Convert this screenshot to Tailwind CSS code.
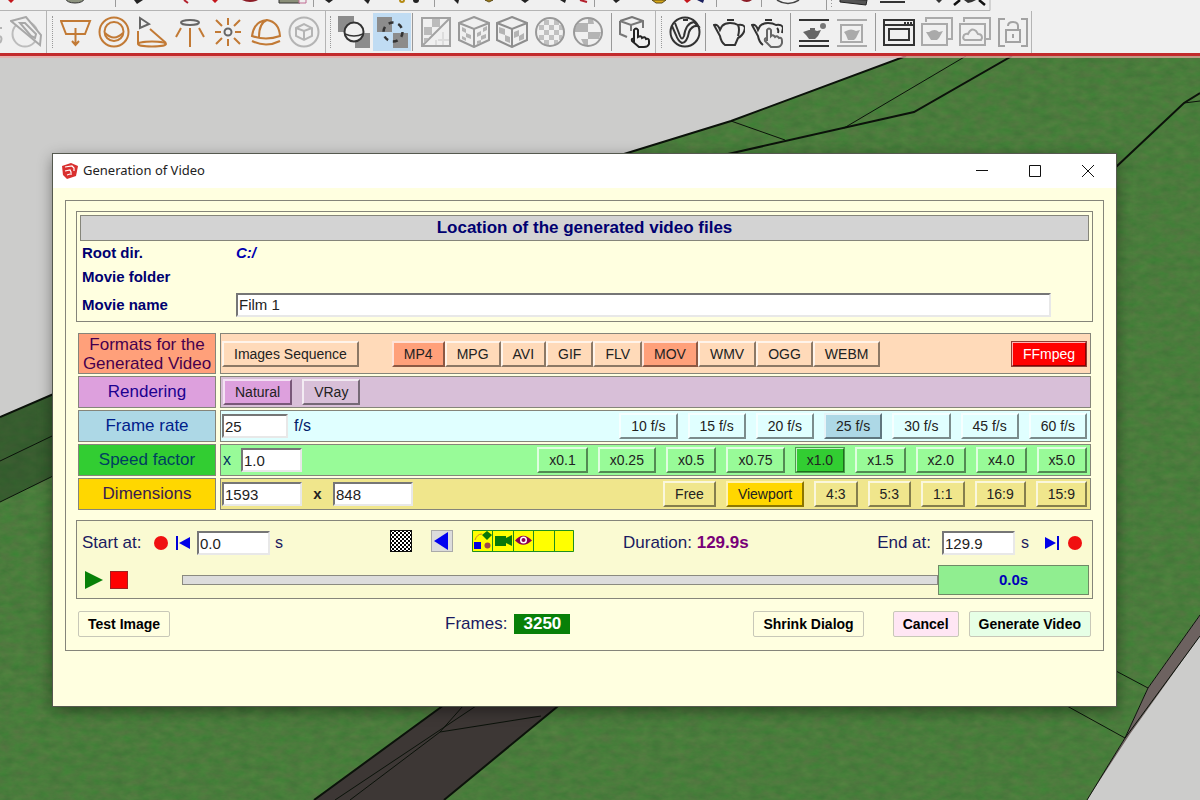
<!DOCTYPE html>
<html lang="en">
<head>
<meta charset="utf-8">
<meta name="viewport" content="width=device-width, initial-scale=1">
<title>Generation of Video</title>
<script src="https://cdn.jsdelivr.net/npm/@tailwindcss/browser@4"></script>
</head>
<body class="min-h-screen flex flex-col overflow-hidden bg-[#cccccb] font-['Liberation_Sans',Arial,sans-serif] text-[#000070]">

<!-- Toolbars -->
<header class="bg-[#f0f0f0] border-b-[3px] border-[#c22a2c]">
  <div class="h-[11px] w-full overflow-hidden">
    <svg class="block" width="1200" height="11" viewBox="0 0 1200 11" aria-hidden="true">
      <path d="M0 10.500H990V0" fill="none" stroke="#b4b4b4"/>
      <path d="M115.500 0V7M313.500 0V7M434.500 0V7M594.500 0V7M716.500 0V7M761.500 0V7M826.500 0V10" stroke="#9a9a9a"/>
      <path d="M831.500 0V8" stroke="#999" stroke-dasharray="1 2"/>
      <path d="M8 0H14L11 3ZM212 0H218L215 3ZM684 0H691L687 3Z" fill="#c4161c"/>
      <ellipse cx="75" cy="-1" rx="9" ry="4" fill="#8e9480" stroke="#333"/>
      <path d="M134 0H143L137 4ZM325 0H333L329 3ZM364 0H370L368 4ZM454 0H459L458 4ZM521 0H529L525 3ZM560 0H566L565 3ZM613 0H620L616 3ZM866 0" fill="#222"/>
      <path d="M184 0L188 3M580 0L587 2" fill="none" stroke="#b3202c" stroke-width="2"/>
      <path d="M242 0H258Q250 4 242 0ZM741 0H752Q747 4 741 0Z" fill="#8c1c26"/>
      <circle cx="402" cy="0" r="2" fill="none" stroke="#b58a13" stroke-width="2"/>
      <circle cx="416" cy="0" r="3" fill="#222"/>
      <path d="M485 0H493L489 2ZM652 0H666L662 3H656Z" fill="#d9a817" stroke="#5b4b1c"/>
      <path d="M697 0H704L703 3Z" fill="#1b2160"/>
      <path d="M279 -1H300V3H279Z" fill="#8b8f79" stroke="#333"/><path d="M299 -1H306V3H299Z" fill="#eee" stroke="#c06a92"/>
      <path d="M777 0Q788 7 799 0" fill="none" stroke="#444" stroke-width="1.500"/>
      <path d="M840 -1L867 0L866 5L840 2Z" fill="#555" stroke="#222"/>
      <path d="M880 2H905" stroke="#333" stroke-width="2"/>
      <path d="M936 0H942L939 3ZM964 0H976L972 2L968 3Z" fill="#333"/>
      <path d="M960 0L954 5M979 0L985 5" fill="none" stroke="#111" stroke-width="2.500"/>
    </svg>
  </div>
  <div class="flex h-[42px] items-center [&_button]:grid [&_button]:h-[38px] [&_button]:w-[38px] [&_button]:shrink-0 [&_button]:place-items-center [&_svg]:h-8 [&_svg]:w-8 [&_svg]:fill-none [&_svg]:stroke-2">
    <div class="flex h-full w-[47px] shrink-0 items-center border-r border-[#b4b4b4]">
      <svg class="-mr-[25px]" viewBox="0 0 32 32" stroke="#b4b4b4" aria-hidden="true"><path d="M0 12H2M0 20Q3 22 0 27"/></svg>
      <button aria-label="Section"><svg viewBox="0 0 32 32" stroke="#a8a8a8"><circle cx="15" cy="18" r="12.500" stroke="#bcbcbc"/><path d="M1 5L16 1L31 19L30 29Z" fill="#f0f0f0"/><path d="M10 7L15 7L26 18L25 22L21 20Z"/></svg></button>
    </div>
    <div class="flex h-full w-[279px] shrink-0 items-center gap-1 border-r border-[#b4b4b4] pl-[5px]">
      <span class="h-8 w-0 border-l border-dotted border-[#999]"></span>
      <div class="flex">
        <button aria-label="Rectangle light"><svg viewBox="0 0 32 32" stroke="#c27a35"><path d="M1 5H30L25 18H6ZM15.500 12V28M12 25L15.500 29L19 25"/></svg></button>
        <button aria-label="Sphere light"><svg viewBox="0 0 32 32" stroke="#c27a35"><circle cx="16" cy="16" r="14.500"/><circle cx="16" cy="15.500" r="9.500"/><path d="M7 17Q16 26 25 17"/></svg></button>
        <button aria-label="Spot light"><svg viewBox="0 0 32 32" stroke="#c27a35"><path d="M4 2L13 8L4 12Z" stroke="#666"/><path d="M2 15V28M14 13L30 27"/><ellipse cx="16" cy="28" rx="14" ry="2.500"/></svg></button>
        <button aria-label="IES light"><svg viewBox="0 0 32 32" stroke="#c27a35"><ellipse cx="16" cy="6.500" rx="9" ry="2.500" stroke="#666"/><path d="M16 12V31M7 12L2 21M25 12L30 21"/></svg></button>
        <button aria-label="Omni light"><svg viewBox="0 0 32 32" stroke="#c27a35"><circle cx="16" cy="16" r="3.500" stroke="#666"/><path d="M16 2V9M16 23V30M3 16H9M23 16H29M4 4L10 10M28 4L22 10M4 28L10 22M28 28L22 22"/></svg></button>
        <button aria-label="Dome light"><svg viewBox="0 0 32 32" stroke="#c27a35"><path d="M2 20Q4 5 17 4Q29 6 30 20Q16 25 2 20ZM9 21Q9 7 17 4M2 25Q16 32 30 25"/></svg></button>
        <button aria-label="Mesh light"><svg viewBox="0 0 32 32" stroke="#b4b4b4"><circle cx="16" cy="16" r="14.500"/><path d="M8 12L16 8L24 12V20L16 24L8 20ZM8 12L16 15L24 12M16 15V24"/></svg></button>
      </div>
    </div>
    <div class="flex h-full w-[330px] shrink-0 items-center gap-1 border-r border-[#b4b4b4] pl-1">
      <span class="h-8 w-0 border-l border-dotted border-[#999]"></span>
      <div class="flex border-r border-[#999] pr-px">
        <button aria-label="Add material"><svg viewBox="0 0 32 32" stroke="#333"><path d="M0 0H16V16H0ZM17 17H32V32H17Z" fill="#8c8c8c" stroke="none"/><circle cx="16" cy="16" r="9.500" fill="#f0f0f0"/><path d="M7 18Q16 22 25 18" stroke-width="1.500"/></svg></button>
        <button aria-label="Remove material" class="bg-[#c0dcf3]"><svg viewBox="0 0 32 32" stroke="#333"><path d="M1 1H16V16H1ZM17 17H32V32H17Z" fill="#8c8c8c" stroke="none"/><circle cx="17" cy="16" r="9.500" stroke-width="2.500" stroke-dasharray="5 5"/></svg></button>
      </div>
      <div class="flex border-r border-[#999] pr-1">
        <button aria-label="Plane mapping"><svg viewBox="0 0 32 32" stroke="#a2a2a2"><path d="M2 2H30V30H2ZM2 30L30 2"/><path d="M12 3H20V11H12ZM4 11H12V19H4ZM4 22H9L4 27Z" fill="#bbb" stroke="none"/><path d="M16 24V29M23 16V29M18 24H29" stroke="#ddd"/></svg></button>
        <button aria-label="Cube mapping fine"><svg viewBox="0 0 32 32" stroke="#999"><path d="M16 1L31 7V24L16 31L1 24V7ZM1 7L16 13L31 7M16 13V31"/><path d="M4 11L8 13V17L4 15ZM8 17L13 19V23L8 21ZM4 20L8 22V25L4 23ZM19 17L23 15V19L19 21ZM23 20L28 18V22L23 24ZM25 12L29 10V14L25 16ZM19 25L23 24V27L19 28Z" fill="#b4b4b4" stroke="none"/></svg></button>
        <button aria-label="Cube mapping coarse"><svg viewBox="0 0 32 32" stroke="#8e8e8e"><path d="M16 1L31 7V24L16 31L1 24V7ZM1 7L16 13L31 7M16 13V31"/><path d="M3 11L9 13V19L3 17ZM9 19L14 21V27L9 25ZM18 16L23 14V20L18 22ZM23 20L28 17V23L23 25Z" fill="#b4b4b4" stroke="none"/></svg></button>
        <button aria-label="Sphere mapping fine"><svg viewBox="0 0 32 32" stroke="#999"><path d="M10 4H15V9H10ZM20 4H25V9H20ZM5 9H10V14H5ZM15 9H20V14H15ZM25 9H29V14H25ZM10 14H15V19H10ZM20 14H25V19H20ZM5 19H10V24H5ZM15 19H20V24H15ZM25 19H28V24H25ZM10 24H15V29H10ZM20 24H24V28H20Z" fill="#c0c0c0" stroke="none"/><circle cx="16" cy="16" r="14"/></svg></button>
        <button aria-label="Sphere mapping coarse"><svg viewBox="0 0 32 32" stroke="#999"><path d="M6 7H16V16H3L3 12ZM16 16H29L27 23H16ZM9 23H16V29H12ZM16 3H21L22 8H16Z" fill="#b4b4b4" stroke="none"/><circle cx="16" cy="16" r="14"/></svg></button>
      </div>
      <button aria-label="Pick object"><svg viewBox="0 0 32 32" stroke="#777"><path d="M1 5L13 1L24 5V12M1 5L12 9L24 5M1 5V18L8 21M12 9V15"/><path d="M15 26V14Q17 11 19 14V21Q22 19 23 22Q26 20 27 23Q30 22 30 25V28Q29 31 25 31H20L13 25Q12 22 15 23" fill="#f0f0f0" stroke="#222"/></svg></button>
    </div>
    <div class="flex h-full w-[376px] shrink-0 items-center gap-1 border-r border-[#b4b4b4] pl-[5px]">
      <span class="h-8 w-0 border-l border-dotted border-[#999]"></span>
      <div class="flex border-r border-[#999] pr-px"><button aria-label="Render settings"><svg viewBox="0 0 32 32" stroke="#333"><circle cx="16" cy="16" r="14.500"/><path d="M6 7L11 20Q13 25 15 20Q17 7 25 6L29 10Q23 9 20 16Q18 27 13 27Q9 25 7 19L3 10M14 4H19"/></svg></button></div>
      <div class="flex border-r border-[#999] pr-1">
        <button aria-label="Render"><svg viewBox="0 0 32 32" stroke="#333"><path d="M9 10Q12 7 17 7Q22 7 25 9Q31 8 32 12Q31 19 25 22L22 29H12Q8 26 7 20L1 9Q5 8 7 14L9 10M14 4H21M25 9Q27 13 25 20"/></svg></button>
        <button aria-label="Interactive render"><svg viewBox="0 0 32 32" stroke="#333"><path d="M12 29Q8 26 7 20L1 9Q5 8 7 14L9 10Q12 7 17 7Q22 7 25 9Q31 8 32 12L31 17M14 4H21M26 12Q28 14 27 17"/><path d="M16 25V14Q18 11 20 14V20Q22 18 24 21Q26 19 28 22Q31 21 31 25V27Q30 31 26 31H20L14 25Q13 22 16 22" fill="#eee" stroke="#666"/></svg></button>
      </div>
      <div class="flex border-r border-[#999] pr-1">
        <button aria-label="Viewport render"><svg viewBox="0 0 32 32" stroke="#333"><path d="M1 4H31M1 25H31M1 30H31"/><path d="M8 15Q14 12 19 15L23 14L20 20L17 23H11L8 19L5 16ZM12 12H17V14H12Z" fill="#666" stroke="none"/><circle cx="25" cy="10" r="3" fill="#777" stroke="none"/></svg></button>
        <button aria-label="Viewport region"><svg viewBox="0 0 32 32" stroke="#aaa"><path d="M1 4H31M1 30H31M5 9H26V26H5Z"/><path d="M10 15Q15 12 20 15L24 14L20 22L18 24H12L10 19L8 16Z" fill="#aaa" stroke="none"/></svg></button>
      </div>
      <div class="flex">
        <button aria-label="Frame buffer"><svg viewBox="0 0 32 32" stroke="#333"><path d="M1 4H31V29H1ZM1 9H31M6 13H26V24H6Z"/><path d="M21 7H29" stroke-dasharray="2 1"/></svg></button>
        <button aria-label="Batch render"><svg viewBox="0 0 32 32" stroke="#aaa"><path d="M5 6V2H31V23H27M1 8H26V29H1Z"/><path d="M8 16Q14 12 18 16L22 15L18 22L16 24H10L5 16Z" fill="#aaa" stroke="none"/></svg></button>
        <button aria-label="Cloud render"><svg viewBox="0 0 32 32" stroke="#aaa"><path d="M5 6V2H31V23H27M1 8H26V29H1Z"/><path d="M6 24Q3 23 5 19Q7 17 9 18Q12 11 17 15L19 18Q23 18 23 22L22 24Z"/></svg></button>
        <button aria-label="Lock camera"><svg viewBox="0 0 32 32" stroke="#a2a2a2"><path d="M8 3H2V30H8M24 3H30V30H24M9 14H23V26H9ZM11 10Q11 6 16 6Q21 6 21 10V13M16 18V22"/></svg></button>
      </div>
    </div>
  </div>
</header>

<main class="relative flex-1 pt-[98px] pr-[84px] pl-[53px]">
  <!-- Model viewport behind the dialog -->
  <svg class="absolute inset-0 h-full w-full" viewBox="0 56 1200 744" preserveAspectRatio="xMinYMin slice" aria-hidden="true">
    <defs>
      <filter id="grass" x="0" y="0" width="100%" height="100%" color-interpolation-filters="sRGB">
        <feTurbulence type="fractalNoise" baseFrequency="0.080 0.140" numOctaves="4" seed="7"/>
        <feColorMatrix values="0.120 0 0 0 0.230  0 0.080 0 0 0.445  0.060 0 0 0 0.205  0 0 0 0 1"/>
        <feComposite in2="SourceGraphic" operator="in"/>
      </filter>
    </defs>
    <g filter="url(#grass)">
      <path d="M906 56L731 121L624 154V800H1087L1125 738L1148 688L1200 615V56Z"/>
      <path d="M0 417L100 374L700 374V800H0Z"/>
    </g>
    <path d="M0 417L100 374V453L0 502Z" fill="#243d22" opacity="0.500"/>
    <path d="M448 702L314 800H444L563 702Z" fill="#3d3735"/>
    <path d="M1200 615L1148 688L1125 738L1087 800L1130 734L1200 636Z" fill="#6d6260"/>
    <g fill="none" stroke="#0b120a">
      <path d="M906 56L731 121L624 154M1012 56L914 112L728 154M1200 93L1184 103L1116 167M0 417L100 374M448 702L314 800M563 702L444 800" stroke-width="2"/>
      <path d="M966 56L844 128M731 121L785 140M1184 103L1200 101M0 461L100 413M0 502L100 453M476 706L335 800M463 706L440 732L350 800M440 732L541 716M1200 615L1148 688L1125 738M1125 738L1200 636M1125 738L1087 800M1116 671L1148 688M1067 706L1125 738"/>
    </g>
    <path d="M0 57H1200" stroke="#f0a8a5" stroke-width="2" opacity="0.700"/>
  </svg>

  <section class="relative flex h-[552px] flex-col bg-[#ffffe0] shadow-[0_0_0_1px_#55594f,0_4px_14px_rgba(0,0,0,0.45)]" aria-label="Generation of Video">
    <div class="flex h-[34px] items-center bg-white pr-[2px] pl-[9px] text-black">
      <svg class="h-4 w-4" viewBox="0 0 16 16" aria-hidden="true"><path d="M0 3L9 0L16 3L14 13L5 16L1 12Z" fill="#d9302f"/><path d="M3 4L10 3L12 5V8M3 8L8 7L9 9V12M5 12L8 11" fill="none" stroke="#fff" stroke-width="1.200"/></svg>
      <h1 class="ml-[5px] font-['Noto_Sans',sans-serif] text-[13px] text-[#222]">Generation of Video</h1>
      <div class="ml-auto flex">
        <button class="grid h-[34px] w-[53px] place-items-center" aria-label="Minimize"><svg class="h-3 w-3" viewBox="0 0 12 12"><path d="M0 5.500H12" stroke="#111"/></svg></button>
        <button class="grid h-[34px] w-[53px] place-items-center" aria-label="Maximize"><svg class="h-3 w-3" viewBox="0 0 12 12"><path d="M.5 .5H11.500V11.500H.5Z" fill="none" stroke="#111"/></svg></button>
        <button class="grid h-[34px] w-[53px] place-items-center" aria-label="Close"><svg class="h-3 w-3" viewBox="0 0 12 12"><path d="M0 0L12 12M12 0L0 12" stroke="#111"/></svg></button>
      </div>
    </div>

    <form class="mx-3 mt-3 border border-[#85857a] p-[10px] pb-[13px]">
      <div class="border border-[#85857a] p-[3px] pb-px">
        <h2 class="h-[26px] border border-[#85857a] bg-[#d3d3d3] text-center text-[17px] leading-[24px] font-bold">Location of the generated video files</h2>
        <div class="grid grid-cols-[154px_1fr] items-center pr-[38px] pl-[2px] text-[15px] leading-6 font-bold">
          <span>Root dir.</span><span class="text-[#0000b0] italic">C:/</span>
          <span class="col-span-2 h-[25px]">Movie folder</span>
          <label for="name">Movie name</label>
          <input id="name" value="Film 1" class="my-[3px] h-[24px] border-2 border-t-[#767676] border-r-[#e8e8e8] border-b-[#e8e8e8] border-l-[#767676] bg-white px-px font-normal text-[#222]">
        </div>
      </div>

      <div class="mx-[2px] mt-[11px] grid grid-cols-[138px_1fr] gap-x-1 gap-y-[2px] text-[14px] text-[#222] [&_input]:h-[24px] [&_input]:border-2 [&_input]:border-t-[#767676] [&_input]:border-r-[#e8e8e8] [&_input]:border-b-[#e8e8e8] [&_input]:border-l-[#767676] [&_input]:bg-white [&_input]:px-px [&_input]:text-[15px] [&>*]:border [&>*]:border-[#85857a] [&_button]:h-[26px] [&_button]:border-2 [&_button]:border-t-white/70 [&_button]:border-r-black/45 [&_button]:border-b-black/45 [&_button]:border-l-white/70 [&_button]:px-[10px] [&_button]:leading-5 [&_button]:whitespace-nowrap">
        <div class="grid h-[41px] place-items-center bg-[#ffa07a] text-center text-[17px] leading-[19px] text-[#46004e]">Formats for the Generated Video</div>
        <div class="flex items-center bg-[#ffdab9] pr-[3px] pl-px">
          <button type="button">Images Sequence</button>
          <div class="ml-[33px] flex">
            <button type="button" aria-pressed="true" class="bg-[#ffa07a]">MP4</button><button type="button">MPG</button><button type="button">AVI</button><button type="button">GIF</button><button type="button">FLV</button><button type="button" aria-pressed="true" class="bg-[#ffa07a]">MOV</button><button type="button">WMV</button><button type="button">OGG</button><button type="button">WEBM</button>
          </div>
          <button type="button" class="ml-auto bg-[#ff0000] text-white outline outline-1 -outline-offset-1 outline-[#8c4038]">FFmpeg</button>
        </div>

        <div class="grid h-[32px] place-items-center bg-[#dda0dd] text-[17px] text-[#1c0090]">Rendering</div>
        <div class="flex items-center gap-[10px] bg-[#d8bfd8] pr-[3px] pl-[2px]">
          <button type="button" aria-pressed="true" class="bg-[#dda0dd]">Natural</button>
          <button type="button">VRay</button>
        </div>

        <label for="rate" class="grid h-[32px] place-items-center bg-[#add8e6] text-[17px] text-[#00208a]">Frame rate</label>
        <div class="flex items-center gap-[10px] bg-[#e0ffff] pr-[3px] pl-px">
          <input id="rate" value="25" class="w-[66px]">
          <span class="-ml-1 text-[16px] text-[#00206a]">f/s</span>
          <button type="button" class="ml-auto">10 f/s</button><button type="button">15 f/s</button><button type="button">20 f/s</button><button type="button" aria-pressed="true" class="bg-[#add8e6]">25 f/s</button><button type="button">30 f/s</button><button type="button">45 f/s</button><button type="button">60 f/s</button>
        </div>

        <label for="speed" class="grid h-[32px] place-items-center bg-[#32cd32] text-[17px] text-[#004060]">Speed factor</label>
        <div class="flex items-center gap-[10px] bg-[#98fb98] pr-[3px] pl-[2px]">
          <span class="text-[16px] text-[#003060]">x</span>
          <input id="speed" value="1.0" class="w-[61px]">
          <button type="button" class="ml-auto">x0.1</button><button type="button">x0.25</button><button type="button">x0.5</button><button type="button">x0.75</button><button type="button" aria-pressed="true" class="bg-[#32cd32] outline outline-1 -outline-offset-1 outline-[#4e9a4e]">x1.0</button><button type="button">x1.5</button><button type="button">x2.0</button><button type="button">x4.0</button><button type="button">x5.0</button>
        </div>

        <label for="width" class="grid h-[32px] place-items-center bg-[#ffd700] text-[17px] text-[#3a1c50]">Dimensions</label>
        <div class="flex items-center gap-[10px] bg-[#f0e68c] pr-[3px] pl-px">
          <input id="width" value="1593" class="w-[80px]">
          <label for="height" class="w-[11px] text-center text-[15px] font-bold">x</label>
          <input id="height" value="848" aria-label="Height" class="w-[80px]">
          <button type="button" class="ml-auto">Free</button><button type="button" aria-pressed="true" class="bg-[#ffd700]">Viewport</button><button type="button">4:3</button><button type="button">5:3</button><button type="button">1:1</button><button type="button">16:9</button><button type="button">15:9</button>
        </div>
      </div>

      <div class="mt-[10px] border border-[#85857a] bg-[#fafad2] pt-[8px] pr-[3px] pb-[3px] pl-[5px] text-[17px] text-[#1a1a60] [&_input[type=text]]:h-[24px] [&_input[type=text]]:w-[73px] [&_input[type=text]]:border-2 [&_input[type=text]]:border-t-[#767676] [&_input[type=text]]:border-r-[#e8e8e8] [&_input[type=text]]:border-b-[#e8e8e8] [&_input[type=text]]:border-l-[#767676] [&_input[type=text]]:bg-white [&_input[type=text]]:px-px [&_input[type=text]]:text-[15px] [&_input[type=text]]:text-[#222]">
        <div class="flex h-[28px] items-center">
          <div class="flex items-center">
            <label for="start" class="w-[72px]">Start at:</label>
            <button type="button" aria-label="Mark start" class="h-[14px] w-[14px] rounded-full bg-[#f01010]"></button>
            <button type="button" aria-label="Go to start" class="mr-[7px] ml-[8px]"><svg class="h-[14px] w-[14px]" viewBox="0 0 14 14"><path d="M1 0V14" stroke="#0000d8" stroke-width="2"/><path d="M14 1V13L3 7Z" fill="#0000e8"/></svg></button>
            <input id="start" type="text" value="0.0">
            <span class="ml-[5px] text-[16px]">s</span>
          </div>
          <div class="mb-1 ml-[107px] flex gap-[19px]">
            <button type="button" aria-label="Transparency"><svg class="h-[22px] w-[22px]" viewBox="0 0 22 22"><defs><pattern id="check" width="4" height="4" patternUnits="userSpaceOnUse"><path d="M0 0H2V2H0ZM2 2H4V4H2Z" fill="#000"/></pattern></defs><path d="M0 0H22V22H0Z" fill="#fff"/><path d="M0 0H22V22H0Z" fill="url(#check)"/><path d="M.5 .5H21.500V21.500H.5Z" fill="none" stroke="#111"/></svg></button>
            <button type="button" aria-label="Previous" class="grid h-[22px] w-[22px] place-items-center border border-[#aaa] bg-[#dcdcdc]"><svg class="h-[18px] w-[18px]" viewBox="0 0 18 18"><path d="M15 0V18L1 9Z" fill="#0000f0"/></svg></button>
            <svg class="h-[22px] w-[102px]" viewBox="0 0 102 22" role="img" aria-label="Scene properties">
              <path d="M0 0H102V22H0Z" fill="#ff0"/>
              <path d="M.5 .5H101.500V21.500H.5ZM20.500 0V22M41.500 0V22M61.500 0V22M82.500 0V22" fill="none" stroke="#1f8f1f"/>
              <path d="M2 12H9V19H2Z" fill="#0000e0"/><path d="M3 10Q5 4 10 4" fill="none" stroke="#d08030"/><path d="M10 5L15 1L20 5L15 10Z" fill="#087808"/><circle cx="15.500" cy="15.500" r="3" fill="#a04848"/>
              <path d="M23 6H34V8L40 5V16L34 13V16H23Z" fill="#087808"/>
              <path d="M43 10.500Q51 1 60 10.500Q51 19 43 10.500Z" fill="#8c0050"/><circle cx="51.500" cy="10" r="3.500" fill="#fff"/><circle cx="51.500" cy="10" r="2" fill="#8c0050"/>
            </svg>
          </div>
          <p class="ml-[49px]">Duration: <strong class="text-[#780078]">129.9s</strong></p>
          <div class="mr-[7px] ml-auto flex items-center">
            <label for="end" class="mr-[11px]">End at:</label>
            <input id="end" type="text" value="129.9">
            <span class="ml-[6px] text-[16px]">s</span>
            <button type="button" aria-label="Go to end" class="mr-[9px] ml-[16px]"><svg class="h-[14px] w-[14px]" viewBox="0 0 14 14"><path d="M13 0V14" stroke="#0000d8" stroke-width="2"/><path d="M0 1V13L11 7Z" fill="#0000e8"/></svg></button>
            <button type="button" aria-label="Mark end" class="h-[14px] w-[14px] rounded-full bg-[#f01010]"></button>
          </div>
        </div>
        <div class="mt-[8px] flex items-center">
          <button type="button" aria-label="Play" class="ml-[3px]"><svg class="h-[18px] w-[18px]" viewBox="0 0 18 18"><path d="M0 0V18L18 9Z" fill="#088008"/></svg></button>
          <button type="button" aria-label="Stop" class="ml-[7px] h-[18px] w-[18px] border border-[#a02020] bg-[#ff0000]"></button>
          <input type="range" value="0" aria-label="Position" class="ml-[54px] h-[10px] flex-1 appearance-none border border-[#8a8a80] bg-[#dcdcdc] [&::-webkit-slider-thumb]:h-0 [&::-webkit-slider-thumb]:w-0 [&::-webkit-slider-thumb]:appearance-none">
          <output class="h-[30px] w-[151px] border border-[#6f8a66] bg-[#90ee90] text-center text-[15px] leading-[27px] font-bold text-[#0000b8]">0.0s</output>
        </div>
      </div>

      <div class="mt-[12px] flex items-center px-[2px] [&_button]:h-[26px] [&_button]:rounded-[2px] [&_button]:border [&_button]:border-[#c8c8b8] [&_button]:px-[9px] [&_button]:text-[14px] [&_button]:font-bold [&_button]:whitespace-nowrap [&_button]:text-black">
        <div class="flex flex-1"><button type="button">Test Image</button></div>
        <p class="flex items-center gap-[7px] text-[17px] text-[#1a1a60]">Frames: <strong class="h-[20px] w-[56px] bg-[#088008] text-center leading-5 text-white">3250</strong></p>
        <div class="ml-[183px] flex items-center">
          <button type="button" class="mr-[29px]">Shrink Dialog</button>
          <button type="button" class="mr-[10px] bg-[#ffe6f4]">Cancel</button>
          <button type="submit" class="bg-[#e6ffe6]">Generate Video</button>
        </div>
      </div>
    </form>
  </section>
</main>
</body>
</html>
